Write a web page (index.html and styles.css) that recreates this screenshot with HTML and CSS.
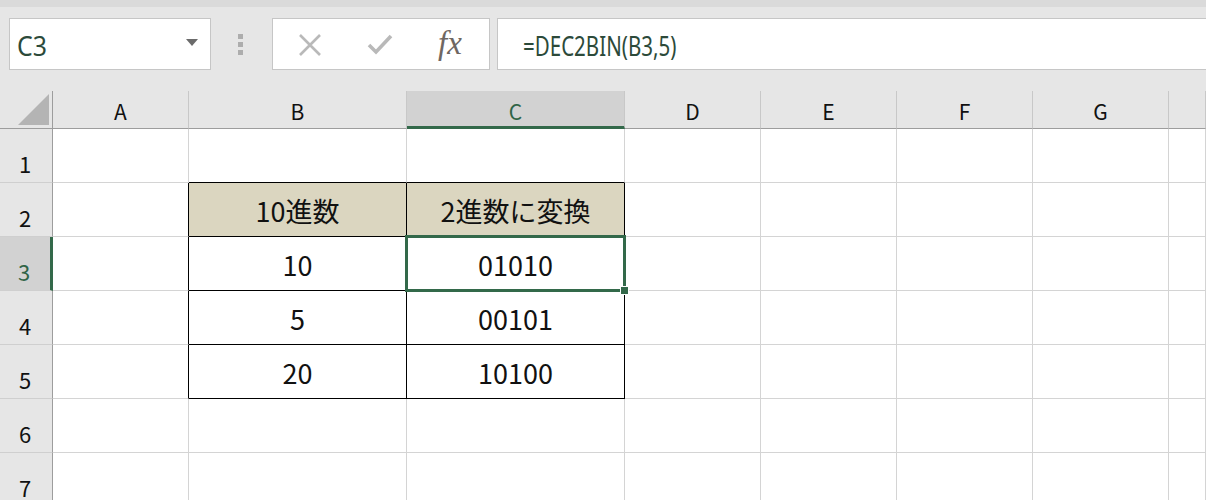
FILE: index.html
```html
<!DOCTYPE html>
<html lang="ja">
<head>
<meta charset="utf-8">
<title>DEC2BIN</title>
<link rel="stylesheet" href="styles.css">
</head>
<body>
<div class="ribbon-edge"></div>
<div class="formula-bar">
  <div class="name-box">
    <span class="name-text">C3</span>
    <svg class="caret" width="12" height="7" viewBox="0 0 12 7"><path d="M0 0H12L6 7Z" fill="#6b6b6b"/></svg>
  </div>
  <div class="grip">
    <span></span><span></span><span></span>
  </div>
  <div class="fx-buttons">
    <svg class="btn-cancel" width="24" height="22" viewBox="0 0 24 22"><path d="M2 1L22 21M22 1L2 21" stroke="#b9b9b9" stroke-width="2.6" fill="none"/></svg>
    <svg class="btn-enter" width="26" height="22" viewBox="0 0 26 22"><path d="M2 12L9 19L24 3" stroke="#b9b9b9" stroke-width="3.6" fill="none" stroke-linejoin="miter"/></svg>
    <span class="btn-fx">fx</span>
  </div>
  <div class="formula-input"><span class="formula-text">=DEC2BIN(B3,5)</span></div>
</div>

<div class="sheet">
  <div class="corner"><svg width="31" height="31" viewBox="0 0 31 31"><path d="M31 0V31H0Z" fill="#b4b4b4"/></svg></div>
  <div class="col-head">A</div>
  <div class="col-head">B</div>
  <div class="col-head col-active">C</div>
  <div class="col-head">D</div>
  <div class="col-head">E</div>
  <div class="col-head">F</div>
  <div class="col-head">G</div>
  <div class="col-head"></div>

  <div class="row-head">1</div>
  <div class="cell"></div>
  <div class="cell edge-bottom"></div>
  <div class="cell edge-bottom"></div>
  <div class="cell"></div><div class="cell"></div><div class="cell"></div><div class="cell"></div><div class="cell"></div>

  <div class="row-head">2</div>
  <div class="cell edge-right"></div>
  <div class="cell boxed title">10進数</div>
  <div class="cell boxed title">2進数に変換</div>
  <div class="cell"></div><div class="cell"></div><div class="cell"></div><div class="cell"></div><div class="cell"></div>

  <div class="row-head row-active">3</div>
  <div class="cell edge-right"></div>
  <div class="cell boxed">10</div>
  <div class="cell boxed selected">01010<span class="fill-handle"></span></div>
  <div class="cell"></div><div class="cell"></div><div class="cell"></div><div class="cell"></div><div class="cell"></div>

  <div class="row-head">4</div>
  <div class="cell edge-right"></div>
  <div class="cell boxed">5</div>
  <div class="cell boxed">00101</div>
  <div class="cell"></div><div class="cell"></div><div class="cell"></div><div class="cell"></div><div class="cell"></div>

  <div class="row-head">5</div>
  <div class="cell edge-right"></div>
  <div class="cell boxed">20</div>
  <div class="cell boxed">10100</div>
  <div class="cell"></div><div class="cell"></div><div class="cell"></div><div class="cell"></div><div class="cell"></div>

  <div class="row-head">6</div>
  <div class="cell"></div><div class="cell"></div><div class="cell"></div><div class="cell"></div><div class="cell"></div><div class="cell"></div><div class="cell"></div><div class="cell"></div>

  <div class="row-head">7</div>
  <div class="cell"></div><div class="cell"></div><div class="cell"></div><div class="cell"></div><div class="cell"></div><div class="cell"></div><div class="cell"></div><div class="cell"></div>
</div>
</body>
</html>
```

FILE: styles.css
```css
* { box-sizing: border-box; }

html, body {
  margin: 0;
  padding: 0;
  overflow: hidden;
}

body {
  width: 1206px;
  height: 500px;
  background: #e6e6e6;
  font-family: "Noto Sans CJK JP", "Noto Sans", sans-serif;
  color: #1a1a1a;
}

.ribbon-edge {
  height: 7px;
  background: #dadada;
}

/* formula bar */
.formula-bar {
  display: flex;
  align-items: stretch;
  height: 52px;
  margin: 11px 0 21px 9px;
}

.name-box {
  width: 202px;
  background: #fff;
  border: 1px solid #c6c6c6;
  display: flex;
  align-items: center;
  justify-content: space-between;
  padding: 0 12px 0 7px;
}

.name-text {
  display: inline-block;
  font-family: "Noto Sans", sans-serif;
  font-size: 27px;
  line-height: 1;
  color: #2c4a3a;
  padding-top: 3px;
  transform: scaleX(0.92);
  transform-origin: left center;
}

.caret { margin-top: -4px; }

.grip {
  width: 61px;
  display: flex;
  flex-direction: column;
  align-items: center;
  justify-content: center;
  gap: 3px;
  padding-right: 3px;
}

.grip span {
  width: 5px;
  height: 5px;
  background: #adadad;
}

.fx-buttons {
  width: 218px;
  background: #fff;
  border: 1px solid #c6c6c6;
  display: flex;
  align-items: center;
  padding-left: 25px;
}

.btn-cancel { margin-top: 1px; }
.btn-enter { margin-left: 45px; }

.btn-fx {
  margin-left: 45px;
  font-family: "Liberation Serif", serif;
  font-style: italic;
  font-size: 33px;
  line-height: 1;
  color: #6f6762;
  margin-top: -2px;
}

.formula-input {
  flex: 1;
  margin-left: 7px;
  margin-right: -2px;
  background: #fff;
  border: 1px solid #c6c6c6;
  padding: 3px 0 0 25px;
  display: flex;
  align-items: center;
}

.formula-text {
  display: inline-block;
  font-family: "Noto Sans", sans-serif;
  font-size: 27px;
  line-height: 1;
  color: #2c4a3a;
  white-space: nowrap;
  transform: scaleX(0.76);
  transform-origin: left center;
}

/* sheet grid */
.sheet {
  display: grid;
  grid-template-columns: 53px 136px 218px 218px 136px 136px 136px 136px 1fr;
  grid-template-rows: 38px repeat(7, 54px);
  background: #fff;
}

.corner,
.col-head,
.row-head {
  background: #e6e6e6;
}

.corner {
  border-right: 1px solid #9d9d9d;
  border-bottom: 1px solid #9d9d9d;
  display: flex;
  align-items: flex-end;
  justify-content: flex-end;
  padding: 0 3px 3px 0;
}

.col-head {
  border-right: 1px solid #c8c8c8;
  border-bottom: 1px solid #9d9d9d;
  display: flex;
  align-items: center;
  justify-content: center;
  font-size: 21px;
  padding-top: 3px;
  color: #111;
}

.col-active {
  background: #d2d2d2;
  color: #2f6446;
  border-bottom: 3px solid #33694a;
  padding-top: 5px;
}

.row-head {
  border-right: 1px solid #9d9d9d;
  border-bottom: 1px solid #cfcfcf;
  display: flex;
  align-items: flex-end;
  justify-content: center;
  font-size: 22px;
  padding: 0 2px 0 0;
  line-height: 1;
  padding-bottom: 8px;
  color: #111;
}

.row-active {
  background: #d2d2d2;
  color: #2f6446;
  border-right: 3px solid #33694a;
}

.cell {
  border-right: 1px solid #d4d4d4;
  border-bottom: 1px solid #d4d4d4;
  display: flex;
  align-items: center;
  justify-content: center;
  font-size: 27px;
  padding-top: 2px;
  color: #111;
}

.edge-bottom { border-bottom-color: #000; }
.edge-right { border-right-color: #000; }

.boxed {
  border-right-color: #000;
  border-bottom-color: #000;
}

.title {
  background: #dbd6c0;
}

.selected {
  position: relative;
}

.selected::before {
  content: "";
  position: absolute;
  top: -2px;
  left: -2px;
  right: -2px;
  bottom: -2px;
  border: 3px solid #33694a;
}

.fill-handle {
  position: absolute;
  right: -5px;
  bottom: -5px;
  width: 9px;
  height: 9px;
  background: #33694a;
  border: 1px solid #fff;
}
```
